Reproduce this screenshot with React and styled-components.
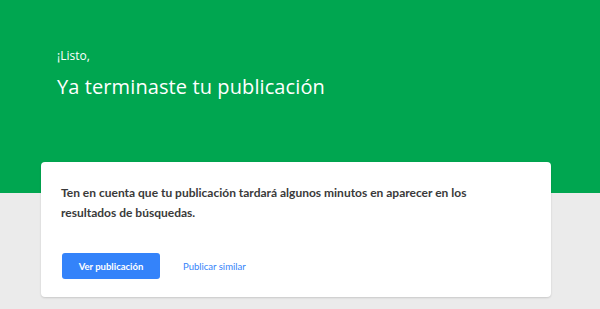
import React from "react";
import styled, { createGlobalStyle } from "styled-components";

const Global = createGlobalStyle`
  html, body { margin: 0; padding: 0; background: #ebebeb; }
  body { font-family: "Open Sans", "Liberation Sans", sans-serif; -webkit-font-smoothing: antialiased; }
`;

const Page = styled.div`
  width: 600px;
  height: 309px;
  background: #ebebeb;
  overflow: hidden;
`;

const Hero = styled.header`
  background: #00a650;
  height: 193px;
  box-sizing: border-box;
  padding: 48px 0 0 57px;
  color: #fff;
`;

const Greeting = styled.div`
  font-size: 12px;
  line-height: 16px;
`;

const Title = styled.h1`
  margin: 11px 0 0;
  font-size: 20px;
  line-height: 24px;
  font-weight: 400;
  letter-spacing: 0.1px;
`;

const Card = styled.section`
  margin: -31px 0 0 41px;
  width: 510px;
  height: 135px;
  box-sizing: border-box;
  background: #fff;
  border-radius: 4px;
  box-shadow: 0 1px 2px rgba(0, 0, 0, 0.15);
  padding: 21px 20px 0 20px;
`;

const Message = styled.p`
  margin: 0;
  font-family: Lato, "Open Sans", sans-serif;
  font-size: 12px;
  line-height: 20px;
  font-weight: 700;
  color: #3a3a3a;
  max-width: 420px;
`;

const Actions = styled.div`
  display: flex;
  align-items: center;
  gap: 23px;
  margin-top: 30px;
  padding-left: 1px;
`;

const PrimaryButton = styled.button`
  width: 98px;
  height: 26px;
  border: 0;
  border-radius: 3px;
  background: #3483fa;
  color: #fff;
  font-family: Lato, "Open Sans", sans-serif;
  font-size: 9.5px;
  font-weight: 700;
  padding: 0;
  cursor: pointer;
`;

const LinkButton = styled.a`
  color: #3483fa;
  font-family: Lato, "Open Sans", sans-serif;
  font-size: 9.5px;
  font-weight: 400;
  text-decoration: none;
`;

export default function App() {
  return (
    <>
      <Global />
      <Page>
        <Hero>
          <Greeting>¡Listo,</Greeting>
          <Title>Ya terminaste tu publicación</Title>
        </Hero>
        <Card>
          <Message>
            Ten en cuenta que tu publicación tardará algunos minutos en aparecer en los resultados de búsquedas.
          </Message>
          <Actions>
            <PrimaryButton>Ver publicación</PrimaryButton>
            <LinkButton href="#">Publicar similar</LinkButton>
          </Actions>
        </Card>
      </Page>
    </>
  );
}
